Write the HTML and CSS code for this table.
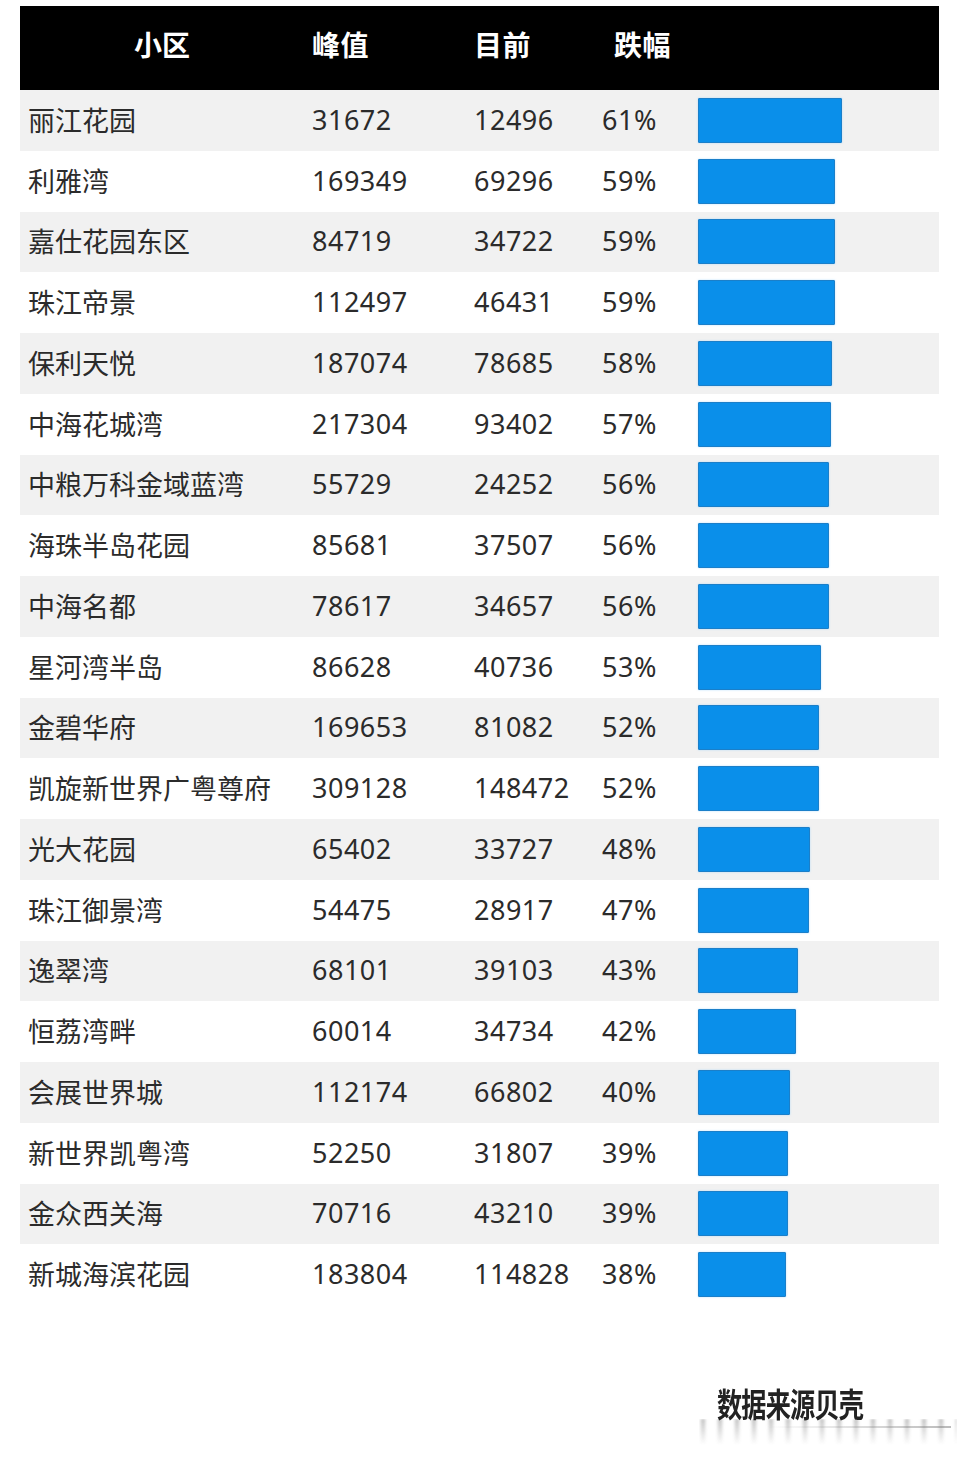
FILE: index.html
```html
<!DOCTYPE html>
<html lang="zh">
<head>
<meta charset="utf-8">
<title>小区跌幅</title>
<link rel="stylesheet" href="styles.css">
</head>
<body>
<div class="page">
  <div class="table">
    <div class="row head">
      <div class="c-name h-name">小区</div>
      <div class="c-num">峰值</div>
      <div class="c-num">目前</div>
      <div class="c-pct h-pct">跌幅</div>
      <div class="c-bar"></div>
    </div>
    <div class="row odd"><div class="c-name">丽江花园</div><div class="c-num">31672</div><div class="c-num">12496</div><div class="c-pct">61%</div><div class="c-bar"><span class="bar" style="width:144px"></span></div></div>
    <div class="row"><div class="c-name">利雅湾</div><div class="c-num">169349</div><div class="c-num">69296</div><div class="c-pct">59%</div><div class="c-bar"><span class="bar" style="width:137px"></span></div></div>
    <div class="row odd"><div class="c-name">嘉仕花园东区</div><div class="c-num">84719</div><div class="c-num">34722</div><div class="c-pct">59%</div><div class="c-bar"><span class="bar" style="width:137px"></span></div></div>
    <div class="row"><div class="c-name">珠江帝景</div><div class="c-num">112497</div><div class="c-num">46431</div><div class="c-pct">59%</div><div class="c-bar"><span class="bar" style="width:137px"></span></div></div>
    <div class="row odd"><div class="c-name">保利天悦</div><div class="c-num">187074</div><div class="c-num">78685</div><div class="c-pct">58%</div><div class="c-bar"><span class="bar" style="width:134px"></span></div></div>
    <div class="row"><div class="c-name">中海花城湾</div><div class="c-num">217304</div><div class="c-num">93402</div><div class="c-pct">57%</div><div class="c-bar"><span class="bar" style="width:133px"></span></div></div>
    <div class="row odd"><div class="c-name">中粮万科金域蓝湾</div><div class="c-num">55729</div><div class="c-num">24252</div><div class="c-pct">56%</div><div class="c-bar"><span class="bar" style="width:131px"></span></div></div>
    <div class="row"><div class="c-name">海珠半岛花园</div><div class="c-num">85681</div><div class="c-num">37507</div><div class="c-pct">56%</div><div class="c-bar"><span class="bar" style="width:131px"></span></div></div>
    <div class="row odd"><div class="c-name">中海名都</div><div class="c-num">78617</div><div class="c-num">34657</div><div class="c-pct">56%</div><div class="c-bar"><span class="bar" style="width:131px"></span></div></div>
    <div class="row"><div class="c-name">星河湾半岛</div><div class="c-num">86628</div><div class="c-num">40736</div><div class="c-pct">53%</div><div class="c-bar"><span class="bar" style="width:123px"></span></div></div>
    <div class="row odd"><div class="c-name">金碧华府</div><div class="c-num">169653</div><div class="c-num">81082</div><div class="c-pct">52%</div><div class="c-bar"><span class="bar" style="width:121px"></span></div></div>
    <div class="row"><div class="c-name">凯旋新世界广粤尊府</div><div class="c-num">309128</div><div class="c-num">148472</div><div class="c-pct">52%</div><div class="c-bar"><span class="bar" style="width:121px"></span></div></div>
    <div class="row odd"><div class="c-name">光大花园</div><div class="c-num">65402</div><div class="c-num">33727</div><div class="c-pct">48%</div><div class="c-bar"><span class="bar" style="width:112px"></span></div></div>
    <div class="row"><div class="c-name">珠江御景湾</div><div class="c-num">54475</div><div class="c-num">28917</div><div class="c-pct">47%</div><div class="c-bar"><span class="bar" style="width:111px"></span></div></div>
    <div class="row odd"><div class="c-name">逸翠湾</div><div class="c-num">68101</div><div class="c-num">39103</div><div class="c-pct">43%</div><div class="c-bar"><span class="bar" style="width:100px"></span></div></div>
    <div class="row"><div class="c-name">恒荔湾畔</div><div class="c-num">60014</div><div class="c-num">34734</div><div class="c-pct">42%</div><div class="c-bar"><span class="bar" style="width:98px"></span></div></div>
    <div class="row odd"><div class="c-name">会展世界城</div><div class="c-num">112174</div><div class="c-num">66802</div><div class="c-pct">40%</div><div class="c-bar"><span class="bar" style="width:92px"></span></div></div>
    <div class="row"><div class="c-name">新世界凯粤湾</div><div class="c-num">52250</div><div class="c-num">31807</div><div class="c-pct">39%</div><div class="c-bar"><span class="bar" style="width:90px"></span></div></div>
    <div class="row odd"><div class="c-name">金众西关海</div><div class="c-num">70716</div><div class="c-num">43210</div><div class="c-pct">39%</div><div class="c-bar"><span class="bar" style="width:90px"></span></div></div>
    <div class="row"><div class="c-name">新城海滨花园</div><div class="c-num">183804</div><div class="c-num">114828</div><div class="c-pct">38%</div><div class="c-bar"><span class="bar" style="width:88px"></span></div></div>
  </div>
  <div class="footer">
    <div class="source">
      <span class="src-text">数据来源贝壳</span>
      <span class="src-smear" aria-hidden="true"></span>
      <span class="src-line" aria-hidden="true"></span>
    </div>
  </div>
</div>
</body>
</html>
```

FILE: styles.css
```css
html, body {
  margin: 0;
  padding: 0;
  background: #ffffff;
}

body {
  font-family: "Noto Sans", "Noto Sans CJK SC", sans-serif;
  color: #2b2b2b;
}

.page {
  width: 975px;
  height: 1466px;
  padding-top: 6px;
  box-sizing: border-box;
}

.table {
  margin-left: 20px;
  width: 919px;
}

.row {
  display: grid;
  grid-template-columns: 284px 162px 128px 96px 1fr;
  align-items: center;
  height: 60.75px;
  padding-left: 8px;
  padding-bottom: 2px;
  box-sizing: border-box;
  font-size: 27px;
  line-height: 1;
}

.row.odd {
  background: #f1f1f1;
}

.row.head {
  height: 84px;
  background: #000000;
  color: #ffffff;
  font-weight: 700;
  font-size: 28px;
  font-family: "Noto Sans CJK SC", sans-serif;
  padding-bottom: 8px;
}

.c-name {
  font-family: "Noto Sans CJK SC", sans-serif;
  white-space: nowrap;
}

.h-name {
  text-align: center;
  padding-right: 16px;
}

.h-pct {
  padding-left: 12px;
}

.c-num, .c-pct {
  white-space: nowrap;
  letter-spacing: 0.5px;
}

.c-bar {
  display: flex;
  align-items: center;
  padding-top: 2px;
}

.bar {
  display: block;
  height: 45px;
  background: #0a8fea;
  border: 1px solid #1b7fc9;
  box-sizing: border-box;
  border-radius: 1px;
  box-shadow: 0 0 2px rgba(120, 200, 255, 0.6);
}

.footer {
  display: flex;
  justify-content: flex-end;
  padding-top: 80px;
  padding-right: 104px;
}

.source {
  position: relative;
  width: 154px;
  height: 36px;
}

.src-text {
  display: block;
  font-family: "Noto Sans CJK SC", sans-serif;
  font-weight: 700;
  font-size: 30px;
  line-height: 36px;
  color: #222222;
  white-space: nowrap;
  transform: scale(0.84, 1.1);
  transform-origin: left center;
  letter-spacing: -1px;
}

.src-smear {
  position: absolute;
  left: -18px;
  top: 34px;
  width: 258px;
  height: 26px;
  background: repeating-linear-gradient(to right,
    rgba(40, 40, 40, 0) 0px,
    rgba(40, 40, 40, 0.4) 4px,
    rgba(40, 40, 40, 0) 8px,
    rgba(40, 40, 40, 0) 17px);
  -webkit-mask-image: linear-gradient(to bottom, rgba(0,0,0,0.8) 0%, rgba(0,0,0,0) 100%);
  mask-image: linear-gradient(to bottom, rgba(0,0,0,0.8) 0%, rgba(0,0,0,0) 100%);
  filter: blur(1.2px);
}

.src-line {
  position: absolute;
  left: 50px;
  top: 41px;
  width: 184px;
  height: 2px;
  background: linear-gradient(to right, rgba(150,150,150,0), rgba(120,120,120,0.5));
}
```
